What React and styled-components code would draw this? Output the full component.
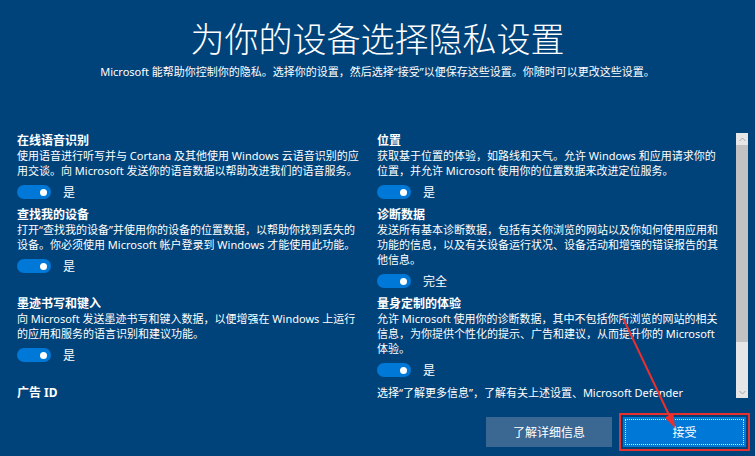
import React from 'react';
import styled, { createGlobalStyle } from 'styled-components';

const GlobalStyle = createGlobalStyle`
  html, body {
    margin: 0;
    padding: 0;
    background: #00437b;
  }
  * {
    box-sizing: border-box;
  }
`;

const FONT = `"Noto Sans", "Noto Sans CJK SC", sans-serif`;

const Page = styled.div`
  position: relative;
  width: 755px;
  height: 456px;
  overflow: hidden;
  background: #00437b;
  color: #fff;
  font-family: ${FONT};
  display: flex;
  flex-direction: column;
`;

const Header = styled.header`
  padding-top: 18px;
  text-align: center;
`;

const Title = styled.h1`
  margin: 0;
  font-size: 34px;
  line-height: 40px;
  font-weight: 300;
  font-family: "Noto Sans CJK SC", sans-serif;
`;

const Subtitle = styled.p`
  margin: 6px 0 0;
  font-size: 11px;
  line-height: 16px;
`;

const ScrollArea = styled.div`
  margin-top: 53px;
  height: 266px;
  display: flex;
`;

const Content = styled.div`
  flex: 1;
  overflow: hidden;
  padding-left: 17px;
  display: grid;
  grid-template-columns: 350px 350px;
  column-gap: 10px;
  row-gap: 8px;
  align-content: start;
  align-items: start;
`;

const Setting = styled.section`
  display: flex;
  flex-direction: column;
`;

const Heading = styled.h3`
  margin: 0;
  font-size: 12px;
  line-height: 15px;
  font-weight: 700;
`;

const Desc = styled.p`
  margin: 0;
  font-size: 11px;
  line-height: 15px;
  white-space: pre-line;
`;

const ToggleRow = styled.div`
  margin-top: 7px;
  height: 14px;
  display: flex;
  align-items: center;
  gap: 12px;
  font-size: 12px;
`;

const Toggle = styled.span`
  width: 34px;
  height: 14px;
  border-radius: 7px;
  background: #0078d7;
  display: flex;
  align-items: center;
  justify-content: ${({ on }) => (on ? 'flex-end' : 'flex-start')};
  padding: 0 4px;
`;

const Knob = styled.span`
  width: 7px;
  height: 7px;
  border-radius: 50%;
  background: #fff;
`;

const Scrollbar = styled.div`
  width: 12px;
  margin-right: 7px;
  height: 265px;
  background: #e6e6e6;
  display: flex;
  flex-direction: column;
`;

const ScrollButton = styled.div`
  height: 12px;
  display: flex;
  align-items: center;
  justify-content: center;
`;

const Thumb = styled.div`
  height: 197px;
  background: #c2c2c2;
`;

const Track = styled.div`
  flex: 1;
`;

const Footer = styled.footer`
  margin-top: 18px;
  display: flex;
  justify-content: flex-end;
  gap: 11px;
  padding-right: 9px;
`;

const Button = styled.button`
  height: 30px;
  width: ${({ primary }) => (primary ? '123px' : '126px')};
  border: 0;
  padding: 0;
  color: #fff;
  font-family: ${FONT};
  font-size: 12px;
  background: ${({ primary }) => (primary ? '#0078d7' : '#3b6892')};
  display: flex;
  align-items: center;
  justify-content: center;
  ${({ primary }) =>
    primary &&
    `
    outline: 2px solid #e8302f;
    outline-offset: 2px;
  `}
`;

const FocusRing = styled.span`
  align-self: stretch;
  flex: 1;
  margin: 2px;
  border: 1px dotted rgba(255, 255, 255, 0.85);
  display: flex;
  align-items: center;
  justify-content: center;
`;

const Annotation = styled.svg`
  position: absolute;
  left: 0;
  top: 0;
  pointer-events: none;
`;

const left = [
  {
    title: '在线语音识别',
    desc: '使用语音进行听写并与 Cortana 及其他使用 Windows 云语音识别的应\n用交谈。向 Microsoft 发送你的语音数据以帮助改进我们的语音服务。',
    label: '是',
  },
  {
    title: '查找我的设备',
    desc: '打开“查找我的设备”并使用你的设备的位置数据，以帮助你找到丢失的\n设备。你必须使用 Microsoft 帐户登录到 Windows 才能使用此功能。',
    label: '是',
  },
  {
    title: '墨迹书写和键入',
    desc: '向 Microsoft 发送墨迹书写和键入数据，以便增强在 Windows 上运行\n的应用和服务的语言识别和建议功能。',
    label: '是',
  },
  { title: '广告 ID' },
];

const right = [
  {
    title: '位置',
    desc: '获取基于位置的体验，如路线和天气。允许 Windows 和应用请求你的\n位置，并允许 Microsoft 使用你的位置数据来改进定位服务。',
    label: '是',
  },
  {
    title: '诊断数据',
    desc: '发送所有基本诊断数据，包括有关你浏览的网站以及你如何使用应用和\n功能的信息，以及有关设备运行状况、设备活动和增强的错误报告的其\n他信息。',
    label: '完全',
  },
  {
    title: '量身定制的体验',
    desc: '允许 Microsoft 使用你的诊断数据，其中不包括你所浏览的网站的相关\n信息，为你提供个性化的提示、广告和建议，从而提升你的 Microsoft\n体验。',
    label: '是',
  },
  {
    desc: '选择“了解更多信息”，了解有关上述设置、Microsoft Defender SmartScreen\n的工作原理以及相关数据传输和使用方式的信息。',
  },
];

const rows = [];
left.forEach((item, i) => {
  rows.push(item);
  rows.push(right[i]);
});

const Chevron = ({ up }) => (
  <svg width="7" height="5" viewBox="0 0 7 5">
    <polyline
      points={up ? '0.5,4 3.5,1 6.5,4' : '0.5,1 3.5,4 6.5,1'}
      fill="none"
      stroke="#a6a6a6"
      strokeWidth="1"
    />
  </svg>
);

const App = () => {
  return (
    <>
      <GlobalStyle />
      <Page>
        <Header>
          <Title>为你的设备选择隐私设置</Title>
          <Subtitle>
            Microsoft 能帮助你控制你的隐私。选择你的设置，然后选择“接受”以便保存这些设置。你随时可以更改这些设置。
          </Subtitle>
        </Header>
        <ScrollArea>
          <Content>
            {rows.map((item, index) => (
              <Setting key={index}>
                {item.title && <Heading>{item.title}</Heading>}
                {item.desc && <Desc>{item.desc}</Desc>}
                {item.label && (
                  <ToggleRow>
                    <Toggle on>
                      <Knob />
                    </Toggle>
                    {item.label}
                  </ToggleRow>
                )}
              </Setting>
            ))}
          </Content>
          <Scrollbar>
            <ScrollButton>
              <Chevron up />
            </ScrollButton>
            <Thumb />
            <Track />
            <ScrollButton>
              <Chevron />
            </ScrollButton>
          </Scrollbar>
        </ScrollArea>
        <Footer>
          <Button>了解详细信息</Button>
          <Button primary>
            <FocusRing>接受</FocusRing>
          </Button>
        </Footer>
        <Annotation width="755" height="456" viewBox="0 0 755 456">
          <line x1="623" y1="318" x2="669.5" y2="416" stroke="#e8302f" strokeWidth="2" />
          <polygon points="675,428 664.6,417.6 673.4,413.4" fill="#e8302f" />
        </Annotation>
      </Page>
    </>
  );
};

export default App;
